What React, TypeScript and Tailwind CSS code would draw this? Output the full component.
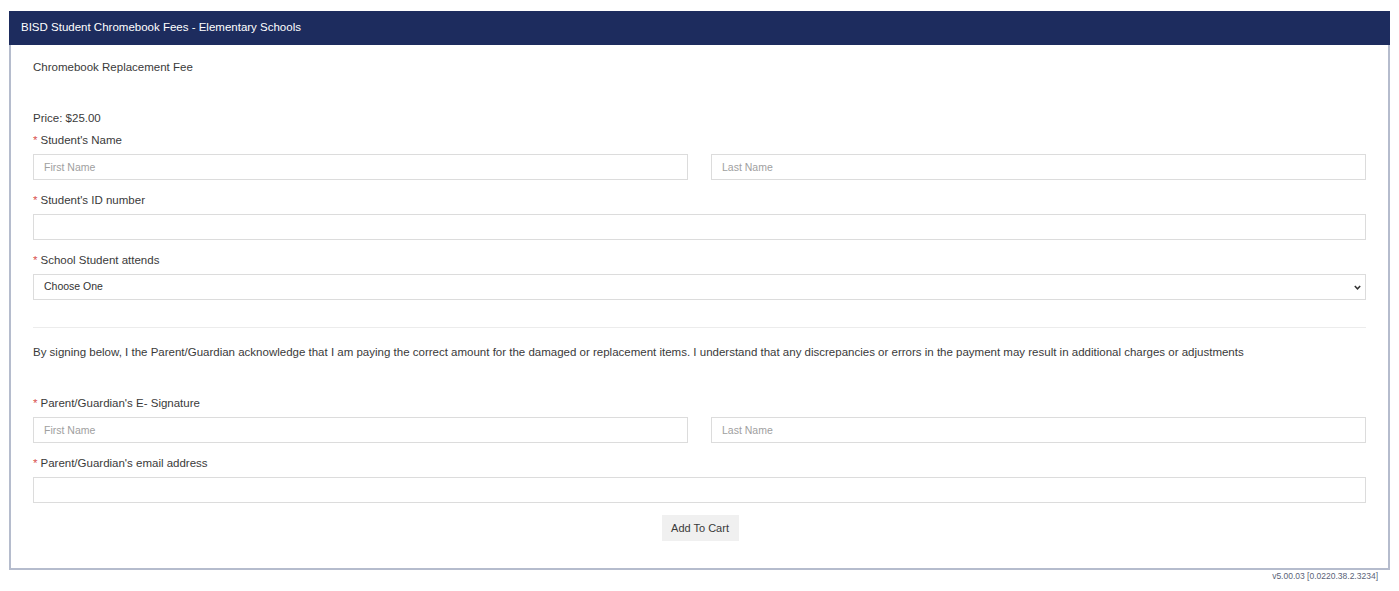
import React from "react";

const Req = () => <span className="text-[#d9534f] mr-[3px]">*</span>;

const Label = ({ children, mt }: { children: React.ReactNode; mt: string }) => (
  <div className={`${mt} h-[14px] leading-[14px] text-[11.5px] text-[#3a3a3a]`}>
    <Req />
    {children}
  </div>
);

const Input = ({ placeholder }: { placeholder?: string }) => (
  <input
    placeholder={placeholder}
    className="block w-full h-[26px] border border-[#dcdcdc] bg-white px-[10px] text-[10.5px] text-[#333] placeholder:text-[#a0a0a0] outline-none"
    style={{ fontFamily: "inherit" }}
  />
);

export default function App() {
  return (
    <div className="w-[1399px] h-[591px] bg-white relative" style={{ fontFamily: '"Liberation Sans", Arial, sans-serif' }}>
      <div className="pt-[11px] pl-[9px]">
        <div className="w-[1381px] h-[559px] border-2 border-t-0 border-[#b5bccd] flex flex-col">
          <div className="h-[34px] bg-[#1d2c5e] text-white text-[11.5px] flex items-center pl-[12px] -mx-[2px]">
            BISD Student Chromebook Fees - Elementary Schools
          </div>
          <div className="px-[22px] flex flex-col">
            <div className="mt-[15px] h-[14px] leading-[14px] text-[11.5px] text-[#3a3a3a]">Chromebook Replacement Fee</div>
            <div className="mt-[37px] h-[14px] leading-[14px] text-[11.5px] text-[#3a3a3a]">Price: $25.00</div>
            <Label mt="mt-[8px]">Student's Name</Label>
            <div className="mt-[7px] flex gap-[23px]">
              <Input placeholder="First Name" />
              <Input placeholder="Last Name" />
            </div>
            <Label mt="mt-[13px]">Student's ID number</Label>
            <div className="mt-[7px]">
              <Input />
            </div>
            <Label mt="mt-[13px]">School Student attends</Label>
            <div className="mt-[7px] h-[26px] border border-[#dcdcdc] flex items-center justify-between pl-[10px] pr-[4px] text-[10.5px] text-[#333]">
              <span>Choose One</span>
              <svg width="7" height="5" viewBox="0 0 7 5">
                <path d="M0.8 1 L3.5 3.8 L6.2 1" fill="none" stroke="#333" strokeWidth="1.5" />
              </svg>
            </div>
            <div className="mt-[27px] h-px bg-[#ececec]" />
            <div className="mt-[17px] h-[14px] leading-[14px] text-[11.5px] text-[#3a3a3a] whitespace-nowrap">
              By signing below, I the Parent/Guardian acknowledge that I am paying the correct amount for the damaged or replacement items. I understand that any discrepancies or errors in the payment may result in additional charges or adjustments
            </div>
            <Label mt="mt-[37px]">Parent/Guardian's E- Signature</Label>
            <div className="mt-[7px] flex gap-[23px]">
              <Input placeholder="First Name" />
              <Input placeholder="Last Name" />
            </div>
            <Label mt="mt-[13px]">Parent/Guardian's email address</Label>
            <div className="mt-[7px]">
              <Input />
            </div>
            <div className="mt-[12px] flex justify-center">
              <button className="w-[77px] h-[26px] bg-[#f0f0f0] text-[11px] text-[#3a3a3a] ml-[1px]">Add To Cart</button>
            </div>
          </div>
        </div>
        <div className="w-[1369px] text-right text-[8.5px] leading-[10px] text-[#5a6378] mt-[1px]">v5.00.03 [0.0220.38.2.3234]</div>
      </div>
    </div>
  );
}
